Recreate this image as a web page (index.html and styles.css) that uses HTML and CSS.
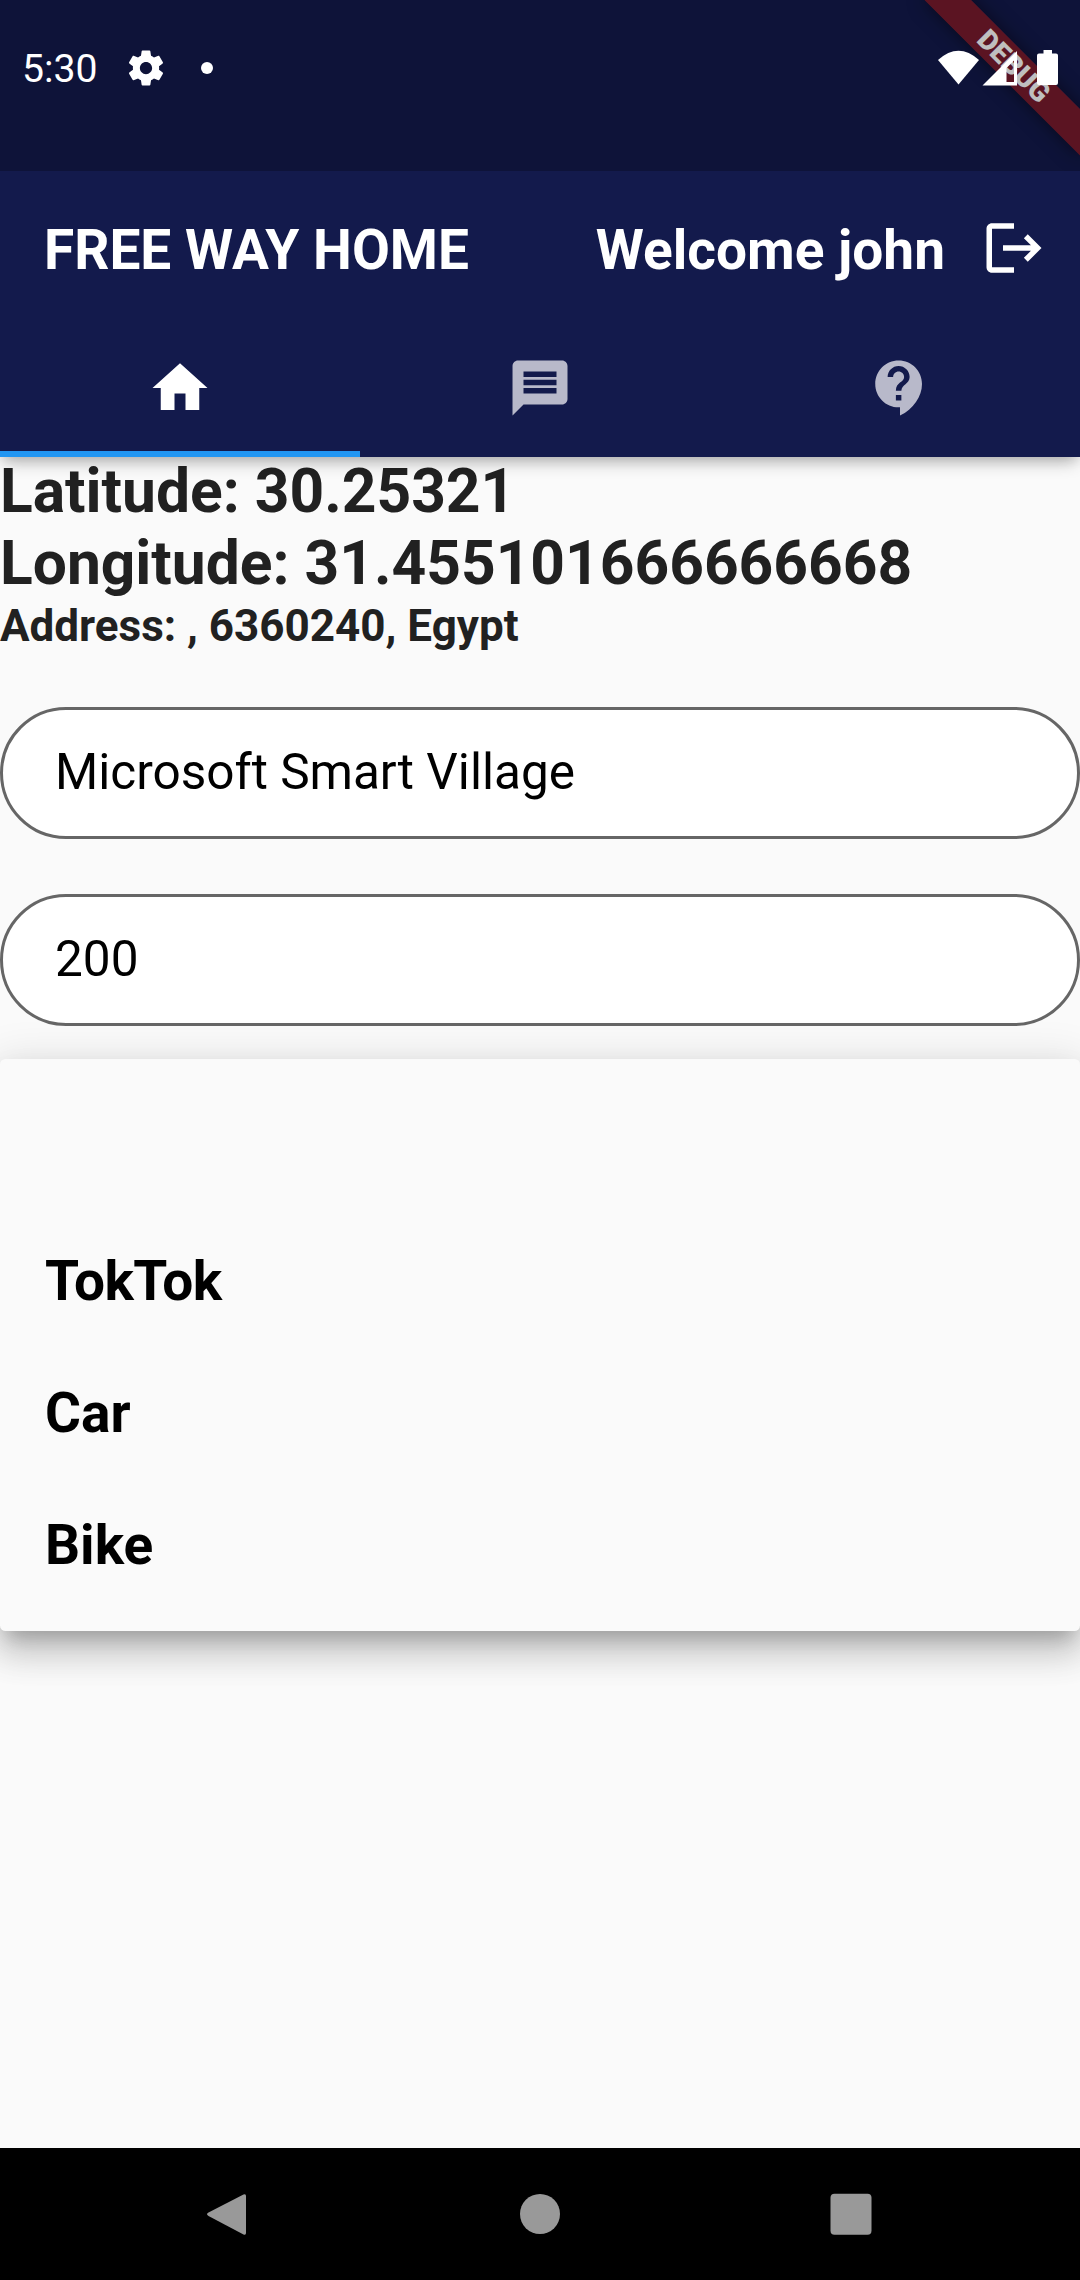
FILE: index.html
```html
<!DOCTYPE html>
<html lang="en">
<head>
<meta charset="utf-8">
<title>Free Way Home</title>
<link rel="stylesheet" href="styles.css">
</head>
<body>
<div class="screen">
  <header class="header">
    <div class="status">
      <div class="banner">DEBUG</div>
      <div class="scrim"></div>
      <div class="status-row">
        <span class="clock">5:30</span>
        <svg class="gear" viewBox="0 0 24 24"><path d="M19.43 12.98c.04-.32.07-.64.07-.98s-.03-.66-.07-.98l2.11-1.65c.19-.15.24-.42.12-.64l-2-3.46c-.12-.22-.39-.3-.61-.22l-2.49 1c-.52-.4-1.08-.73-1.69-.98l-.38-2.65C14.46 2.18 14.25 2 14 2h-4c-.25 0-.46.18-.49.42l-.38 2.65c-.61.25-1.17.59-1.69.98l-2.49-1c-.23-.09-.49 0-.61.22l-2 3.46c-.13.22-.07.49.12.64l2.11 1.65c-.04.32-.07.65-.07.98s.03.66.07.98l-2.11 1.65c-.19.15-.24.42-.12.64l2 3.46c.12.22.39.3.61.22l2.49-1c.52.4 1.08.73 1.69.98l.38 2.65c.03.24.24.42.49.42h4c.25 0 .46-.18.49-.42l.38-2.65c.61-.25 1.17-.59 1.69-.98l2.49 1c.23.09.49 0 .61-.22l2-3.46c.12-.22.07-.49-.12-.64l-2.11-1.65zM12 15.5c-1.93 0-3.5-1.57-3.5-3.5s1.57-3.5 3.5-3.5 3.5 1.57 3.5 3.5-1.57 3.5-3.5 3.5z"/></svg>
        <span class="dot"></span>
        <svg class="signals" viewBox="0 0 120 36">
          <path d="M0 10Q20.500 -8.500 41 10L20.500 34.500z"/>
          <path fill-rule="evenodd" d="M44.500 35.500L79 1V35.500zM68.500 18L76 10.500V32H68.500z"/>
          <path d="M105.500 0H114V3.500H118q2 0 2 2V33q0 2-2 2H101q-2 0-2-2V5.500q0-2 2-2H105.500z"/>
        </svg>
      </div>
    </div>
    <div class="appbar">
      <h1 class="title">FREE WAY HOME</h1>
      <span class="title welcome">Welcome john</span>
      <svg class="icon" viewBox="0 0 24 24"><path d="M17 7l-1.41 1.41L18.17 11H8v2h10.17l-2.58 2.58L17 17l5-5zM4 5h8V3H4c-1.1 0-2 .9-2 2v14c0 1.100.9 2 2 2h8v-2H4V5z"/></svg>
    </div>
    <nav class="tabs">
      <div class="tab active"><svg class="icon" viewBox="0 0 24 24"><path d="M10 20v-6h4v6h5v-8h3L12 3 2 12h3v8z"/></svg></div>
      <div class="tab"><svg class="icon" viewBox="0 0 24 24"><path d="M20 2H4c-1.100 0-1.990.9-1.990 2L2 22l4-4h14c1.100 0 2-.9 2-2V4c0-1.100-.9-2-2-2zm-2 12H6v-2h12v2zm0-3H6V9h12v2zm0-3H6V6h12v2z"/></svg></div>
      <div class="tab"><svg class="icon" viewBox="0 0 24 24"><path d="M11.500 2C6.810 2 3 5.810 3 10.500S6.810 19 11.500 19h.5v3c4.860-2.340 8-7 8-11.500C20 5.810 16.190 2 11.500 2zm1 14.500h-2v-2h2v2zm0-3.500h-2c0-3.250 3-3 3-5 0-1.100-.9-2-2-2s-2 .9-2 2h-2c0-2.210 1.790-4 4-4s4 1.790 4 4c0 2.500-3 2.750-3 5z"/></svg></div>
    </nav>
  </header>
  <main class="content">
    <p class="coord">Latitude: 30.25321</p>
    <p class="coord">Longitude: 31.455101666666668</p>
    <p class="address">Address: , 6360240, Egypt</p>
    <div class="field">Microsoft Smart Village</div>
    <div class="field">200</div>
    <ul class="menu">
      <li class="item"></li>
      <li class="item tight">TokTok</li>
      <li class="item">Car</li>
      <li class="item">Bike</li>
    </ul>
  </main>
  <footer class="navbar">
    <svg class="nav-icon" viewBox="0 0 46 46"><path d="M39.500 3.500Q42 2.500 42 5V42Q42 44.500 39.500 43.500L4.500 25Q1.500 23.300 4.500 21.600z"/></svg>
    <svg class="nav-icon" viewBox="0 0 46 46"><circle cx="24" cy="23" r="20"/></svg>
    <svg class="nav-icon" viewBox="0 0 46 46"><rect x="2.500" y="2.700" width="41" height="41" rx="4"/></svg>
  </footer>
</div>
</body>
</html>
```
FILE: styles.css
```css
* {
  box-sizing: border-box;
  margin: 0;
  padding: 0;
}

body {
  background: #fafafa;
  font-family: Roboto, sans-serif;
}

.screen {
  display: flex;
  flex-direction: column;
  width: 1080px;
  height: 2280px;
  overflow: hidden;
}

svg {
  display: block;
  flex: none;
  fill: currentColor;
}

.header {
  position: relative;
  z-index: 1;
  height: 457px;
  background: #131a4c;
  color: #fff;
  box-shadow: 0 8px 16px -4px rgba(0, 0, 0, 0.3), 0 2px 12px rgba(0, 0, 0, 0.08);
}

/* Status bar */
.status {
  position: relative;
  height: 171px;
  overflow: hidden;
}

.banner {
  position: absolute;
  top: 77px;
  left: 970px;
  width: 220px;
  height: 33px;
  transform: rotate(45deg);
  transform-origin: 110px -77px;
  background: rgba(183, 28, 28, 0.627);
  box-shadow: 0 0 18px rgba(0, 0, 0, 0.5);
  font-size: 28px;
  font-weight: 900;
  line-height: 34px;
  text-align: center;
}

.scrim {
  position: absolute;
  inset: 0;
  background: rgba(0, 0, 0, 0.25);
}

.status-row {
  position: relative;
  display: flex;
  align-items: center;
  height: 135px;
  padding: 0 22px;
}

.clock {
  width: 103px;
  padding-top: 3px;
  font-size: 39.2px;
}

.gear {
  width: 42px;
  height: 42px;
}

.dot {
  width: 12px;
  height: 12px;
  margin-left: 34px;
  border-radius: 50%;
  background: #fff;
}

.signals {
  width: 120px;
  height: 36px;
  margin-left: auto;
}

/* App bar */
.appbar {
  display: flex;
  align-items: center;
  height: 154px;
  padding: 0 33px 0 44px;
}

.title {
  padding-top: 3px;
  font-size: 55px;
  font-weight: 700;
  line-height: 64px;
  white-space: nowrap;
}

.welcome {
  margin: 0 36px 0 auto;
}

.icon {
  width: 66px;
  height: 66px;
}

.tabs {
  display: flex;
  height: 132px;
}

.tab {
  flex: 1;
  display: flex;
  justify-content: center;
  border-bottom: 6px solid transparent;
  align-items: center;
  color: #b8b9ca;
}

.tab.active {
  border-color: #2196f3;
  color: #fff;
}

/* Page body */
.content {
  flex: 1;
  margin-top: -1px;
  color: #212121;
}

.coord {
  font-size: 60.5px;
  font-weight: 700;
  line-height: 72px;
}

.address {
  margin-bottom: 55px;
  font-size: 44px;
  font-weight: 700;
  line-height: 52px;
}

.field {
  height: 132px;
  margin-bottom: 55px;
  padding: 0 52px;
  border: 3px solid #666;
  border-radius: 66px;
  background: #fff;
  color: #000;
  font-size: 49.5px;
  line-height: 125px;
}

.menu {
  position: relative;
  margin-top: -22px;
  padding: 22px 0;
  border-radius: 5.5px;
  background: #fafafa;
  box-shadow:
    0 13.75px 17px -8.25px rgba(0, 0, 0, 0.2),
    0 22px 33px 2.75px rgba(0, 0, 0, 0.14),
    0 8.25px 45px 5.5px rgba(0, 0, 0, 0.12);
  color: #000;
  list-style: none;
}

.item {
  height: 132px;
  padding: 0 45px;
  font-size: 55px;
  font-weight: 700;
  line-height: 136px;
}

.tight {
  letter-spacing: -0.5px;
}

/* System navigation */
.navbar {
  display: flex;
  align-items: center;
  justify-content: space-between;
  height: 132px;
  padding: 0 206px 0 204px;
  background: #000;
  color: #999;
}

.nav-icon {
  width: 46px;
  height: 46px;
}
```
